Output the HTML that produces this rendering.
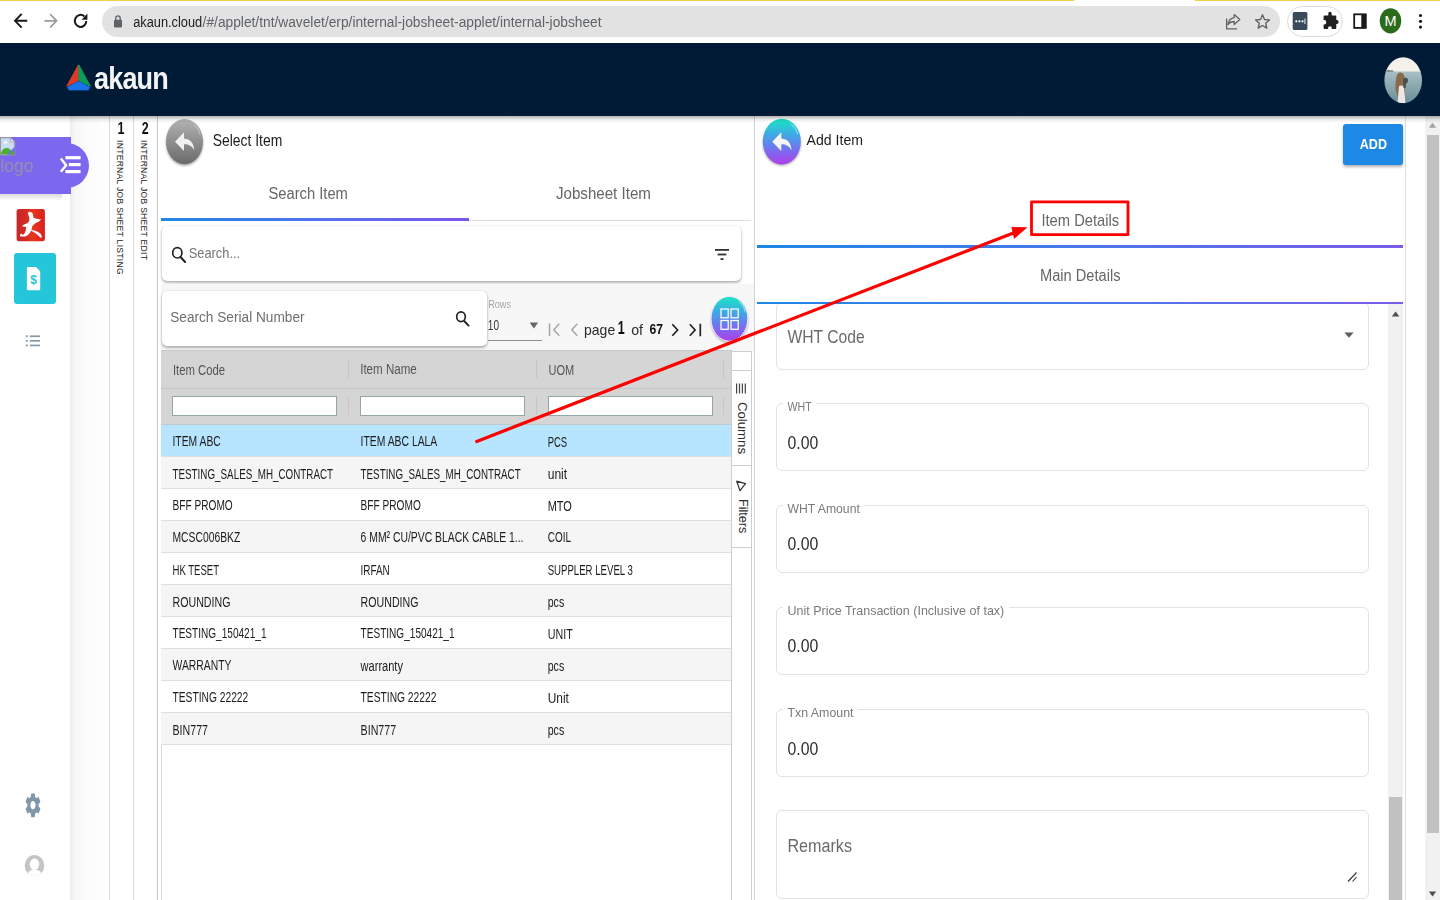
<!DOCTYPE html>
<html lang="en">
<head>
<meta charset="utf-8">
<title>akaun - internal jobsheet</title>
<style>
*{box-sizing:border-box;margin:0;padding:0}
html,body{width:1440px;height:900px;overflow:hidden;background:#fff}
body{position:relative;font-family:"Liberation Sans",sans-serif;color:#222}
.abs{position:absolute}
.t{position:absolute;white-space:nowrap;line-height:1}
/* browser chrome */
#chrome{left:0;top:0;width:1440px;height:43px;background:#fff}
#yl1{left:0;top:0;width:1074px;height:1.200px;background:#f7cf45}
#yl2{left:1195px;top:0;width:245px;height:1.200px;background:#f7cf45}
#urlbar{left:101.500px;top:5.800px;width:1178px;height:31px;border-radius:16px;background:#e2e2e2}
#extpill{left:1287px;top:6px;width:56px;height:31px;border-radius:16px;background:#fff;border:1px solid #dcdcdc}
/* app header */
#hdr{left:0;top:43px;width:1440px;height:72.500px;background:#011a35}
#hshadow{left:0;top:115.500px;width:1440px;height:7px;background:linear-gradient(rgba(0,0,0,.3),rgba(0,0,0,.08) 50%,rgba(0,0,0,0))}
/* sidebar */
#side{left:0;top:116px;width:70px;height:784px;background:#fff}
#sideshadow{left:70px;top:116px;width:39px;height:784px;background:linear-gradient(90deg,#ededed 0,#f6f6f6 12%,#fbfbfb 40%,#fff 100%)}
.vline{position:absolute;top:116px;width:1px;height:784px;background:#d9d9d9}
.vtxt{position:absolute;transform-origin:0 0;transform:rotate(90deg);white-space:nowrap;font-size:8.5px;line-height:10px;color:#222;letter-spacing:.32px}
/* panels */
.tab{color:#666;font-size:15px}
.card{position:absolute;background:#fff;border-radius:5px;box-shadow:0 2px 3px rgba(0,0,0,.28),0 0 2px rgba(0,0,0,.15)}
.gtxt{position:absolute;white-space:nowrap;line-height:1;font-size:14px;color:#1f1f1f;transform-origin:0 50%;transform:scaleX(.8)}
.row{position:absolute;left:162px;width:569px;height:32px;border-bottom:1px solid #dcdcdc}
.fin{position:absolute;top:396px;height:20px;background:#fff;border:1px solid #93a7a7}
.field{position:absolute;left:776px;width:593px;border:1px solid #e2e2e2;border-radius:6px;background:#fff}
.flabel{position:absolute;left:783px;background:#fff;padding:0 4px;font-size:12px;color:#777;line-height:12px;white-space:nowrap}
.fval{position:absolute;left:787px;font-size:16px;color:#333;line-height:16px;white-space:nowrap}
</style>
</head>
<body>

<!-- ============ BROWSER CHROME ============ -->
<div id="chrome" class="abs"></div>
<div id="yl1" class="abs"></div><div id="yl2" class="abs"></div>
<div id="urlbar" class="abs"></div>
<div id="extpill" class="abs"></div>

<svg class="abs" style="left:0;top:0" width="1440" height="43" viewBox="0 0 1440 43">
  <!-- back -->
  <g fill="none" stroke="#1a1a1a" stroke-width="1.9" stroke-linecap="square" stroke-linejoin="miter">
    <path d="M26.3 20.8H15.8M21 14.6l-6 6.2 6 6.2"/>
  </g>
  <!-- forward (disabled) -->
  <g fill="none" stroke="#9b9b9b" stroke-width="1.7" stroke-linecap="square">
    <path d="M45.3 20.8h10.5M50.8 14.8l5.8 6-5.8 6"/>
  </g>
  <!-- reload -->
  <g fill="none" stroke="#1a1a1a" stroke-width="2">
    <path d="M86.3 20.9a5.7 6 0 1 1-1.9-4.5"/>
  </g>
  <path d="M87.4 13.6v6.2h-5.8z" fill="#1a1a1a"/>
  <!-- lock -->
  <rect x="114" y="19.8" width="8" height="7.8" rx="1" fill="#5f6368"/>
  <path d="M115.8 20v-1.8a2.2 2.3 0 0 1 4.4 0V20" fill="none" stroke="#5f6368" stroke-width="1.4"/>
  <!-- share -->
  <g fill="none" stroke="#5f6368" stroke-width="1.3" stroke-linejoin="round">
    <path d="M1226.6 18.5v10.3h10.5"/>
    <path d="M1234.2 14.6l5.6 5-5.6 5v-3.1c-3 0-4.800 1-6.300 3 .5-3.300 2.200-6.300 6.300-6.900z"/>
  </g>
  <!-- star -->
  <path d="M1262.500 14.800l2 4.700 4.900.4-3.700 3.300 1.100 4.900-4.300-2.600-4.300 2.600 1.100-4.900-3.700-3.300 4.900-.4z" fill="none" stroke="#5f6368" stroke-width="1.4" stroke-linejoin="round"/>
  <!-- ext: dark square with dots -->
  <rect x="1292.700" y="12" width="14.700" height="18" rx="1.500" fill="#3a4a5a"/>
  <circle cx="1296.300" cy="21.300" r="1.100" fill="#fff"/><circle cx="1299.400" cy="21.300" r="1.100" fill="#fff"/><circle cx="1302.500" cy="21.300" r="1.100" fill="#fff"/>
  <rect x="1304.500" y="18.600" width=".9" height="5.400" fill="#fff"/>
  <!-- puzzle -->
  <path d="M1328.300 13.700a1.700 1.900 0 0 1 3.400 0v1.700h3.600a1 1 0 0 1 1 1v3.700h.5a1.800 2 0 0 1 0 4h-.5v3.900a1 1 0 0 1-1 1h-3.500v-.8a1.900 2 0 0 0-3.800 0v.8h-3.400a1 1 0 0 1-1-1v-3.500h.700a2 2.200 0 0 0 0-4.400h-.700v-3.700a1 1 0 0 1 1-1h3.700z" fill="#1f1f1f"/>
  <!-- side panel -->
  <rect x="1354.200" y="14.300" width="11.500" height="13.600" fill="none" stroke="#1a1a1a" stroke-width="1.800"/>
  <rect x="1361.300" y="14" width="5" height="14.200" fill="#1a1a1a"/>
  <!-- profile -->
  <ellipse cx="1390.500" cy="20.800" rx="10.800" ry="12.600" fill="#2b6b1c"/>
  <text x="1390.500" y="26" font-family="Liberation Sans, sans-serif" font-size="14.500" fill="#fff" text-anchor="middle">M</text>
  <!-- kebab -->
  <circle cx="1420.500" cy="15.500" r="1.600" fill="#1a1a1a"/><circle cx="1420.500" cy="21.300" r="1.600" fill="#1a1a1a"/><circle cx="1420.500" cy="27.100" r="1.600" fill="#1a1a1a"/>
</svg>
<div class="t" id="url" style="left:133.2px;top:16.95px;font-size:12.81px;color:#202124;transform-origin:0 84.65%;transform:scaleY(1.13);">akaun.cloud</div>
<div class="t" style="left:202.6px;top:16.15px;font-size:13.76px;color:#5f6368;transform-origin:0 84.65%;transform:scaleY(1.06);">/#/applet/tnt/wavelet/erp/internal-jobsheet-applet/internal-jobsheet</div>


<!-- ============ APP HEADER ============ -->
<div id="hdr" class="abs"></div>

<svg class="abs" style="left:60px;top:58px" width="40" height="40" viewBox="60 58 40 40">
  <path d="M78.300 65L66.800 86.200 78.300 80.500z" fill="#dd3b26" stroke="#dd3b26" stroke-width="1" stroke-linejoin="round"/>
  <path d="M78.900 65L90.300 86.200 78.900 80.500z" fill="#0e9d58" stroke="#0e9d58" stroke-width="1" stroke-linejoin="round"/>
  <path d="M78.600 81.400L67.600 87.300l1.500 2.600h19l1.500-2.600z" fill="#1a73e8" stroke="#1a73e8" stroke-width="1" stroke-linejoin="round"/>
</svg>
<div class="t" id="logotxt" style="left:93.500px;top:62px;font-size:32px;font-weight:bold;color:#f4f4f4;transform-origin:0 0;transform:scaleX(.845);letter-spacing:-1px">akaun</div>
<svg class="abs" style="left:1380px;top:54px" width="48" height="54" viewBox="1380 54 48 54">
  <defs><clipPath id="avc"><ellipse cx="1403.200" cy="80.200" rx="18.800" ry="23"/></clipPath>
  <linearGradient id="sea" x1="0" y1="0" x2="0" y2="1"><stop offset="0" stop-color="#a9bfc4"/><stop offset="1" stop-color="#5f8790"/></linearGradient></defs>
  <g clip-path="url(#avc)">
    <rect x="1380" y="54" width="48" height="18" fill="#f3f1ea"/>
    <rect x="1380" y="71.500" width="48" height="36" fill="url(#sea)"/>
    <path d="M1386 71.600c1-1.400 3-1.600 4-.8 1.500-.8 3.500-.3 4 .8z" fill="#3c5158"/>
    <path d="M1399.500 72.500c-3 1-3.500 6-3.800 10s-.7 8 1.300 12l2.500 8h6l-.5-10 .5-8-1-6c.5-3-1.500-6.500-5-6z" fill="#8a6a4a"/>
    <path d="M1399 86c2-1 4-.5 5 1l1.500 16h-8z" fill="#ece6e6"/>
    <path d="M1403 79c1.500-2 4.500-1.500 5 .5s-1 3.500-2 4.500l-.5 4h-2z" fill="#4a4f52"/>
  </g>
</svg>


<!-- ============ SIDEBAR ============ -->
<div id="side" class="abs"></div>
<div id="sideshadow" class="abs"></div>

<div class="abs" style="left:0;top:193px;width:62px;height:8px;background:linear-gradient(rgba(0,0,0,.16),rgba(0,0,0,0))"></div>
<div class="abs" style="left:43px;top:142.800px;width:45.500px;height:45.500px;border-radius:50%;background:#7b68ee"></div>
<div class="abs" style="left:0;top:137px;width:70.700px;height:56.800px;background:#7b68ee"></div>
<svg class="abs" style="left:0;top:137px" width="16" height="19" viewBox="0 0 16 19">
  <path d="M.5 .8h10.200l4 4.200v13H.5z" fill="#c9dcf5" stroke="#9a9a9a" stroke-width="1"/>
  <path d="M10.700 .8v4.200h4z" fill="#f4f4f4" stroke="#9a9a9a" stroke-width=".8"/>
  <path d="M3 6.200l2.500-2.500 2.500 2.500z" fill="#fff"/>
  <path d="M1 17.500c0-4 2.500-6.500 5.500-6.500s4 1.500 5 3.500l2.500 3z" fill="#4caf35"/>
  <path d="M14.700 9.500L7 17.800h7.700z" fill="#7b68ee"/>
  <path d="M11 15.500l3.200-2v4.300h-4z" fill="#4caf35"/>
</svg>
<div class="t" id="logoalt" style="left:.5px;top:157.300px;font-size:17.400px;color:#958fae;transform-origin:0 0;transform:scaleY(1.06)">logo</div>
<svg class="abs" style="left:58px;top:154px" width="24" height="22" viewBox="58 154 24 22">
  <path d="M60.800 158.600l5.400 6.600-5.400 6.600" fill="none" stroke="#fff" stroke-width="2.400"/>
  <rect x="65.400" y="156.100" width="15.200" height="3.200" fill="#fff"/>
  <rect x="68.800" y="163" width="11.800" height="3.200" fill="#fff"/>
  <rect x="65.400" y="170" width="15.200" height="3.200" fill="#fff"/>
</svg>
<!-- red icon -->
<svg class="abs" style="left:16px;top:208px" width="30" height="34" viewBox="0 0 30 34">
  <defs><linearGradient id="rg" x1="0" y1="0" x2="1" y2="0"><stop offset="0" stop-color="#c62828"/><stop offset=".25" stop-color="#cf2a27"/><stop offset=".6" stop-color="#e8351f"/><stop offset="1" stop-color="#d81f1f"/></linearGradient></defs>
  <rect x=".6" y=".9" width="28.300" height="32.400" rx="2.500" fill="url(#rg)"/>
  <path d="M12.700 3.700C14.500 3.600 16 4.400 16.600 5.500 17.200 7 17.300 8.500 17.400 9.600 20 11 22.500 11.600 25 11.200 24 13 22 14.200 20.200 14.800 18.500 15.800 17 17 16.200 18.500 15.800 20 15.600 21.200 15.500 22 19 22.300 22.500 24 24.800 26 25.600 27.200 25.900 28.500 25.800 29.600L24.600 29.800C22 27 18.500 24.300 15 22.800 14 25.500 12 27.500 9.400 28.400L4.300 28.400C3.900 27.800 3.900 27.200 4.200 26.600L5.800 25.600 6.600 27C8.400 26 9.200 24.500 9.600 23 10 21.500 10.200 20 10.200 19 8.800 19 7.400 18.800 6.100 18.200 6.600 17.400 7.300 17 8 16.600 10 16 11.800 15 12.800 13.800 13.500 12.500 13.500 10.800 13.200 9.200 12.800 7.800 12.200 6.500 12 5.300z" fill="#fff"/>
</svg>
<!-- teal box -->
<div class="abs" style="left:14px;top:253px;width:42px;height:51px;border-radius:3px;background:#26c6da"></div>
<svg class="abs" style="left:26px;top:266px" width="16" height="26" viewBox="0 0 16 26">
  <path d="M2.300 1h7.700l4.200 4.200v17.700a1.400 1.400 0 0 1-1.400 1.400H2.300A1.400 1.400 0 0 1 .9 22.900V2.400A1.400 1.400 0 0 1 2.300 1z" fill="#fff"/>
  <text x="7.600" y="17.700" font-family="Liberation Sans, sans-serif" font-weight="bold" font-size="12" fill="#26c6da" text-anchor="middle">$</text>
</svg>
<!-- list icon -->
<svg class="abs" style="left:25px;top:334px" width="16" height="14" viewBox="0 0 16 14">
  <g fill="#8699a8"><rect x=".8" y="1.200" width="1.800" height="2"/><rect x=".8" y="5.800" width="1.800" height="2"/><rect x=".8" y="10.400" width="1.800" height="2"/>
  <rect x="4.800" y="1.400" width="10.200" height="1.700"/><rect x="4.800" y="6" width="10.200" height="1.700"/><rect x="4.800" y="10.600" width="10.200" height="1.700"/></g>
</svg>
<!-- gear -->
<svg class="abs" style="left:23.600px;top:790.500px" width="18" height="28.500" viewBox="0 0 24 24" preserveAspectRatio="none">
  <path fill="#8097a7" d="M19.430 12.980c.040-.320.070-.640.070-.980s-.030-.660-.070-.980l2.110-1.650c.190-.150.240-.420.120-.640l-2-3.460c-.120-.220-.390-.300-.610-.220l-2.490 1c-.520-.400-1.080-.730-1.690-.980l-.380-2.650C14.460 2.180 14.250 2 14 2h-4c-.250 0-.460.180-.490.420l-.380 2.650c-.610.250-1.170.590-1.690.980l-2.490-1c-.230-.090-.490 0-.610.220l-2 3.460c-.130.220-.070.490.120.640l2.110 1.650c-.040.320-.070.650-.070.980s.030.660.070.980l-2.110 1.650c-.190.150-.240.420-.120.640l2 3.460c.120.220.390.300.610.220l2.490-1c.520.400 1.080.730 1.690.980l.380 2.650c.030.240.240.420.490.420h4c.250 0 .460-.180.490-.420l.380-2.650c.610-.250 1.170-.590 1.690-.980l2.490 1c.230.090.490 0 .610-.220l2-3.460c.120-.220.070-.490-.120-.640l-2.110-1.650zM12 15.500c-1.930 0-3.500-1.570-3.500-3.500s1.570-3.500 3.500-3.500 3.500 1.570 3.500 3.500-1.570 3.500-3.500 3.500z"/>
</svg>
<!-- user -->
<svg class="abs" style="left:24px;top:854px" width="22" height="24" viewBox="0 0 22 24">
  <defs><clipPath id="uc"><ellipse cx="10.500" cy="11.600" rx="9.800" ry="10.600"/></clipPath></defs>
  <g clip-path="url(#uc)"><rect width="22" height="24" fill="#c4c4c4"/>
  <ellipse cx="10.500" cy="10.200" rx="4.700" ry="5.700" fill="#fff"/>
  <path d="M2.500 24c0-5 3-8.500 8-8.500s8 3.500 8 8.500z" fill="#fff"/></g>
</svg>
<div class="vline" style="left:109px"></div>
<div class="vline" style="left:133px"></div>
<div class="vline" style="left:156.800px;width:1.500px;background:#c9c9c9"></div>
<div class="t" style="left:117.52px;top:124.400px;font-size:12.5px;color:#111;font-weight:bold;transform-origin:0 84.65%;transform:scaleY(1.34);">1</div>
<div class="t" style="left:141.82px;top:124.400px;font-size:12.5px;color:#111;font-weight:bold;transform-origin:0 84.65%;transform:scaleY(1.34);">2</div>
<div class="vtxt" id="vt1" style="left:125px;top:140px">INTERNAL JOB SHEET LISTING</div>
<div class="vtxt" id="vt2" style="left:149px;top:140px">INTERNAL JOB SHEET EDIT</div>


<!-- ============ LEFT PANEL ============ -->
<!--LEFT-PANEL-START-->
<div class="abs" style="left:160.500px;top:351px;width:1px;height:549px;background:#d4d8da"></div>
<div class="abs" style="left:754px;top:116px;width:1.300px;height:784px;background:#d2d2d2"></div>
<svg class="abs" style="left:160px;top:114px" width="50" height="58" viewBox="160 114 50 58">
<defs><linearGradient id="gb" x1="0" y1="0" x2="0" y2="1"><stop offset="0" stop-color="#b4b4b4"/><stop offset=".5" stop-color="#8e8e8e"/><stop offset="1" stop-color="#6a6a6a"/></linearGradient>
<filter id="bs" x="-30%" y="-30%" width="160%" height="170%"><feGaussianBlur stdDeviation="1.300"/></filter></defs>
<ellipse cx="184.500" cy="143.500" rx="18.500" ry="22.200" fill="#000" opacity=".35" filter="url(#bs)"/>
<ellipse cx="184.500" cy="141.600" rx="18.500" ry="22.600" fill="url(#gb)"/>
<path d="M193.800 124.500c3.300 2.400 5.600 6 6.400 10" fill="none" stroke="#d8d8d8" stroke-width=".9" opacity=".8"/>
<path d="M184 132.300v6.200c6.500.6 9.800 4.500 10.300 11.800-2.300-4.300-5.600-6-10.300-6v6.800l-9-9.400z" fill="#f0f0f0"/>
</svg>
<div class="t" id="selitem" style="left:212.7px;top:134.52px;font-size:13.91px;color:#1c1c1c;transform-origin:0 84.65%;transform:scaleY(1.12);">Select Item</div>
<div class="t" style="left:268.4px;top:186.7px;font-size:14.76px;color:#666;transform-origin:0 84.65%;transform:scaleY(1.11);">Search Item</div>
<div class="t" id="jobtab" style="left:556px;top:186.4px;font-size:15.12px;color:#666;transform-origin:0 84.65%;transform:scaleY(1.09);">Jobsheet Item</div>
<div class="abs" style="left:161px;top:219.500px;width:590px;height:1px;background:#dcdcdc"></div>
<div class="abs" style="left:160.700px;top:217.500px;width:308px;height:3px;background:linear-gradient(90deg,#1e88e5,#5a6df0 60%,#7a54f0)"></div>
<div class="card" style="left:162px;top:226px;width:579.200px;height:55px"></div>
<svg class="abs" style="left:170px;top:245px" width="18" height="19" viewBox="170 245 18 19"><ellipse cx="177.300" cy="252.800" rx="4.600" ry="5.200" fill="none" stroke="#222" stroke-width="1.700"/><path d="M180.500 257l4.600 5" stroke="#222" stroke-width="2" stroke-linecap="round"/></svg>
<div class="t" style="left:188.7px;top:248.01px;font-size:12.87px;color:#757575;transform-origin:0 84.65%;transform:scaleY(1.18);">Search...</div>
<svg class="abs" style="left:714px;top:247px" width="16" height="14" viewBox="714 247 16 14"><g fill="#333"><rect x="715" y="249" width="14" height="1.800"/><rect x="717.600" y="253.600" width="8.800" height="1.800"/><rect x="720.500" y="258.200" width="3" height="1.800"/></g></svg>
<div class="abs" style="left:161px;top:284px;width:593px;height:67px;background:#f7f7f7"></div>
<div class="card" style="left:162px;top:290.500px;width:325px;height:55px"></div>
<div class="t" style="left:170.2px;top:311.33px;font-size:13.67px;color:#6e6e6e;transform-origin:0 84.65%;transform:scaleY(1.12);">Search Serial Number</div>
<svg class="abs" style="left:454px;top:309px" width="18" height="19" viewBox="454 309 18 19"><ellipse cx="461" cy="316.800" rx="4.300" ry="4.900" fill="none" stroke="#222" stroke-width="1.700"/><path d="M464.200 321l4.400 4.600" stroke="#222" stroke-width="1.900" stroke-linecap="round"/></svg>
<div class="t" style="left:488.2px;top:300.88px;font-size:9.12px;color:#a5a5a5;transform-origin:0 84.65%;transform:scaleY(1.21);">Rows</div>
<div class="t" style="left:487.8px;top:321.68px;font-size:10.07px;color:#3a3a3a;transform-origin:0 84.65%;transform:scaleY(1.44);">10</div>
<svg class="abs" style="left:528px;top:321px" width="12" height="9" viewBox="0 0 12 9"><path d="M1.600 1.600h8.600l-4.300 5.800z" fill="#666"/></svg>
<div class="abs" style="left:488px;top:340px;width:54px;height:1px;background:#8e8e8e"></div>
<svg class="abs" style="left:546px;top:320px" width="160" height="20" viewBox="546 320 160 20" fill="none" stroke-width="1.500">
<g stroke="#a6a6a6"><path d="M549.500 323.500v12.500M559.300 323.800l-5.500 6 5.500 6"/><path d="M577.300 323.800l-5.500 6 5.500 6"/></g>
<g stroke="#222" stroke-width="1.700"><path d="M672.300 324.200l5.300 5.800-5.300 5.800"/><path d="M689.800 324.200l5.300 5.800-5.300 5.800M700.300 323.700v12.500"/></g></svg>
<div class="t" style="left:584px;top:322.73px;font-size:14.02px;color:#2b2b2b;transform-origin:0 84.65%;transform:scaleY(1.1);">page</div>
<div class="t" style="left:617.8px;top:324.12px;font-size:12.5px;color:#111;font-weight:bold;transform-origin:0 84.65%;transform:scaleY(1.47);">1</div>
<div class="t" style="left:631.25px;top:322.62px;font-size:14.15px;color:#2b2b2b;transform-origin:0 84.65%;transform:scaleY(1.1);">of</div>
<div class="t" style="left:649.6px;top:324.33px;font-size:12.14px;color:#111;font-weight:bold;transform-origin:0 84.65%;transform:scaleY(1.2);">67</div>
<svg class="abs" style="left:706px;top:290px" width="48" height="58" viewBox="706 290 48 58">
<defs><linearGradient id="tp" x1="0" y1="0" x2="0" y2="1"><stop offset="0" stop-color="#19e6c3"/><stop offset=".35" stop-color="#3fa9e6"/><stop offset=".7" stop-color="#7a6cf0"/><stop offset="1" stop-color="#b03ee8"/></linearGradient></defs>
<ellipse cx="729.500" cy="320.500" rx="18.500" ry="22.600" fill="#000" opacity=".3" filter="url(#bs)"/>
<ellipse cx="729.400" cy="318.800" rx="18.400" ry="22.400" fill="url(#tp)" stroke="#f3eef8" stroke-width="1"/>
<path d="M738.800 301.500c3.300 2.600 5.400 6 6.200 10" fill="none" stroke="#c8fff4" stroke-width=".9" opacity=".75"/>
<g fill="none" stroke="#fff" stroke-width="1.250"><rect x="721" y="309" width="7.200" height="8.800"/><rect x="731" y="309" width="7.200" height="8.800"/><rect x="721" y="320.500" width="7.200" height="8.800"/><rect x="731" y="320.500" width="7.200" height="8.800"/></g>
</svg>
<div class="abs" style="left:161px;top:350px;width:570.500px;height:75px;background:#d5d5d5;border-top:1px solid #c4c9cb"></div>
<div class="abs" style="left:161px;top:388px;width:570.500px;height:1px;background:#bfc8ca"></div>
<div class="abs" style="left:161px;top:424px;width:570.500px;height:1px;background:#bfc8ca"></div>
<div class="abs" style="left:348.4px;top:360px;width:1px;height:18px;background:#c6c6c6"></div>
<div class="abs" style="left:348.4px;top:397px;width:1px;height:18px;background:#c6c6c6"></div>
<div class="abs" style="left:536px;top:360px;width:1px;height:18px;background:#c6c6c6"></div>
<div class="abs" style="left:536px;top:397px;width:1px;height:18px;background:#c6c6c6"></div>
<div class="abs" style="left:723px;top:360px;width:1px;height:18px;background:#c6c6c6"></div>
<div class="abs" style="left:723px;top:397px;width:1px;height:18px;background:#c6c6c6"></div>
<div class="t" style="left:172.9px;top:365.52px;font-size:11.32px;color:#555;transform-origin:0 84.65%;transform:scaleY(1.26);">Item Code</div>
<div class="t" style="left:360.2px;top:365.29px;font-size:11.59px;color:#555;transform-origin:0 84.65%;transform:scaleY(1.23);">Item Name</div>
<div class="t" style="left:548.5px;top:365.78px;font-size:11.02px;color:#555;transform-origin:0 84.65%;transform:scaleY(1.29);">UOM</div>
<div class="fin" style="left:172.4px;width:165px"></div>
<div class="fin" style="left:360.2px;width:165px"></div>
<div class="fin" style="left:548px;width:165px"></div>
<div class="abs" style="left:161px;top:425px;width:570.500px;height:32px;background:#b7e4ff;border-bottom:1px solid #dddfe0"></div>
<div class="t" style="left:172.5px;top:438.14px;font-size:10.35px;color:#1c1c1c;transform-origin:0 84.65%;transform:scaleY(1.49);">ITEM ABC</div>
<div class="t" style="left:360.6px;top:438.12px;font-size:10.38px;color:#1c1c1c;transform-origin:0 84.65%;transform:scaleY(1.48);">ITEM ABC LALA</div>
<div class="t" style="left:547.7px;top:438.87px;font-size:9.48px;color:#1c1c1c;transform-origin:0 84.65%;transform:scaleY(1.62);">PCS</div>
<div class="abs" style="left:161px;top:457px;width:570.500px;height:32px;background:#f5f5f5;border-bottom:1px solid #dddfe0"></div>
<div class="t" style="left:172.5px;top:470.58px;font-size:9.83px;color:#1c1c1c;transform-origin:0 84.65%;transform:scaleY(1.57);">TESTING_SALES_MH_CONTRACT</div>
<div class="t" style="left:360.6px;top:470.6px;font-size:9.81px;color:#1c1c1c;transform-origin:0 84.65%;transform:scaleY(1.57);">TESTING_SALES_MH_CONTRACT</div>
<div class="t" style="left:547.7px;top:468.66px;font-size:12.09px;color:#1c1c1c;transform-origin:0 84.65%;transform:scaleY(1.27);">unit</div>
<div class="abs" style="left:161px;top:489px;width:570.500px;height:32px;background:#fff;border-bottom:1px solid #dddfe0"></div>
<div class="t" style="left:172.5px;top:502.33px;font-size:10.13px;color:#1c1c1c;transform-origin:0 84.65%;transform:scaleY(1.52);">BFF PROMO</div>
<div class="t" style="left:360.6px;top:502.33px;font-size:10.13px;color:#1c1c1c;transform-origin:0 84.65%;transform:scaleY(1.52);">BFF PROMO</div>
<div class="t" style="left:547.7px;top:501.6px;font-size:10.98px;color:#1c1c1c;transform-origin:0 84.65%;transform:scaleY(1.4);">MTO</div>
<div class="abs" style="left:161px;top:521px;width:570.500px;height:32px;background:#f5f5f5;border-bottom:1px solid #dddfe0"></div>
<div class="t" style="left:172.5px;top:534.15px;font-size:10.34px;color:#1c1c1c;transform-origin:0 84.65%;transform:scaleY(1.49);">MCSC006BKZ</div>
<div class="t" style="left:360.6px;top:534.1px;font-size:10.4px;color:#1c1c1c;transform-origin:0 84.65%;transform:scaleY(1.48);">6 MM² CU/PVC BLACK CABLE 1...</div>
<div class="t" style="left:547.7px;top:534.45px;font-size:9.98px;color:#1c1c1c;transform-origin:0 84.65%;transform:scaleY(1.54);">COIL</div>
<div class="abs" style="left:161px;top:553px;width:570.500px;height:32px;background:#fff;border-bottom:1px solid #dddfe0"></div>
<div class="t" style="left:172.5px;top:566.8px;font-size:9.57px;color:#1c1c1c;transform-origin:0 84.65%;transform:scaleY(1.61);">HK TESET</div>
<div class="t" style="left:360.6px;top:566.51px;font-size:9.92px;color:#1c1c1c;transform-origin:0 84.65%;transform:scaleY(1.55);">IRFAN</div>
<div class="t" style="left:547.7px;top:566.76px;font-size:9.62px;color:#1c1c1c;transform-origin:0 84.65%;transform:scaleY(1.6);">SUPPLER LEVEL 3</div>
<div class="abs" style="left:161px;top:585px;width:570.500px;height:32px;background:#f5f5f5;border-bottom:1px solid #dddfe0"></div>
<div class="t" style="left:172.5px;top:597.88px;font-size:10.65px;color:#1c1c1c;transform-origin:0 84.65%;transform:scaleY(1.45);">ROUNDING</div>
<div class="t" style="left:360.6px;top:597.88px;font-size:10.65px;color:#1c1c1c;transform-origin:0 84.65%;transform:scaleY(1.45);">ROUNDING</div>
<div class="t" style="left:547.7px;top:597.92px;font-size:10.6px;color:#1c1c1c;transform-origin:0 84.65%;transform:scaleY(1.45);">pcs</div>
<div class="abs" style="left:161px;top:617px;width:570.500px;height:32px;background:#fff;border-bottom:1px solid #dddfe0"></div>
<div class="t" style="left:172.5px;top:630.38px;font-size:10.07px;color:#1c1c1c;transform-origin:0 84.65%;transform:scaleY(1.53);">TESTING_150421_1</div>
<div class="t" style="left:360.6px;top:630.38px;font-size:10.07px;color:#1c1c1c;transform-origin:0 84.65%;transform:scaleY(1.53);">TESTING_150421_1</div>
<div class="t" style="left:547.7px;top:629.83px;font-size:10.72px;color:#1c1c1c;transform-origin:0 84.65%;transform:scaleY(1.44);">UNIT</div>
<div class="abs" style="left:161px;top:649px;width:570.500px;height:32px;background:#f5f5f5;border-bottom:1px solid #dddfe0"></div>
<div class="t" style="left:172.5px;top:662.13px;font-size:10.36px;color:#1c1c1c;transform-origin:0 84.65%;transform:scaleY(1.49);">WARRANTY</div>
<div class="t" style="left:360.6px;top:661.54px;font-size:11.06px;color:#1c1c1c;transform-origin:0 84.65%;transform:scaleY(1.39);">warranty</div>
<div class="t" style="left:547.7px;top:661.92px;font-size:10.6px;color:#1c1c1c;transform-origin:0 84.65%;transform:scaleY(1.45);">pcs</div>
<div class="abs" style="left:161px;top:681px;width:570.500px;height:32px;background:#fff;border-bottom:1px solid #dddfe0"></div>
<div class="t" style="left:172.5px;top:694.22px;font-size:10.25px;color:#1c1c1c;transform-origin:0 84.65%;transform:scaleY(1.5);">TESTING 22222</div>
<div class="t" style="left:360.6px;top:694.22px;font-size:10.25px;color:#1c1c1c;transform-origin:0 84.65%;transform:scaleY(1.5);">TESTING 22222</div>
<div class="t" style="left:547.7px;top:693.81px;font-size:11.92px;color:#1c1c1c;transform-origin:0 84.65%;transform:scaleY(1.29);">Unit</div>
<div class="abs" style="left:161px;top:713px;width:570.500px;height:32px;background:#f5f5f5;border-bottom:1px solid #dddfe0"></div>
<div class="t" style="left:172.5px;top:725.87px;font-size:10.67px;color:#1c1c1c;transform-origin:0 84.65%;transform:scaleY(1.44);">BIN777</div>
<div class="t" style="left:360.6px;top:725.87px;font-size:10.67px;color:#1c1c1c;transform-origin:0 84.65%;transform:scaleY(1.44);">BIN777</div>
<div class="t" style="left:547.7px;top:725.92px;font-size:10.6px;color:#1c1c1c;transform-origin:0 84.65%;transform:scaleY(1.45);">pcs</div>
<div class="abs" style="left:731px;top:350.700px;width:20.500px;height:550px;background:#fff;border-left:1px solid #c9cfd1;border-right:1px solid #c9cfd1;border-top:1px solid #c9cfd1"></div>
<div class="abs" style="left:732px;top:370px;width:18.500px;height:1px;background:#c9cfd1"></div>
<div class="abs" style="left:732px;top:465.2px;width:18.500px;height:1px;background:#c9cfd1"></div>
<div class="abs" style="left:732px;top:546.6px;width:18.500px;height:1px;background:#c9cfd1"></div>
<svg class="abs" style="left:735px;top:382px" width="12" height="13" viewBox="0 0 12 13"><g fill="#444"><rect x="1" y="1.500" width="1.200" height="10"/><rect x="3.900" y="1.500" width="1.200" height="10"/><rect x="6.800" y="1.500" width="1.200" height="10"/><rect x="9.700" y="1.500" width="1.200" height="10"/></g></svg>
<div class="vtxt" id="colsv" style="left:748.500px;top:402.300px;font-size:13.200px;line-height:13px;color:#2e2e2e;letter-spacing:0">Columns</div>
<svg class="abs" style="left:734px;top:478px" width="14" height="15" viewBox="734 478 14 15"><path d="M736.700 481.200L745.500 483.700 740 490.700z" fill="none" stroke="#333" stroke-width="1.200" stroke-linejoin="round"/></svg>
<div class="vtxt" id="filv" style="left:748.500px;top:499px;font-size:12.600px;line-height:13px;color:#2e2e2e;letter-spacing:0">Filters</div>
<!--LEFT-PANEL-END-->

<!-- ============ RIGHT PANEL ============ -->
<!--RIGHT-PANEL-START-->
<div class="abs" style="left:1404.500px;top:116px;width:1px;height:784px;background:#dedede"></div>
<div class="abs" style="left:1425px;top:116px;width:15px;height:784px;background:#f1f1f1"></div>
<div class="abs" style="left:1426.600px;top:135px;width:12.400px;height:698px;background:#c1c1c1"></div>
<svg class="abs" style="left:1425px;top:118px" width="15" height="14" viewBox="0 0 15 14"><path d="M3.800 9.800L7.500 4.800l3.700 5z" fill="#a3a3a3"/></svg>
<svg class="abs" style="left:1425px;top:887px" width="15" height="14" viewBox="0 0 15 14"><path d="M3.800 4.500L7.500 9.500l3.700-5z" fill="#505050"/></svg>
<svg class="abs" style="left:757px;top:114px" width="50" height="58" viewBox="757 114 50 58">
<ellipse cx="781.800" cy="143.500" rx="19" ry="22.200" fill="#000" opacity=".32" filter="url(#bs)"/>
<ellipse cx="781.800" cy="141.600" rx="19" ry="22.800" fill="url(#tp)"/>
<path d="M791.300 124.500c3.300 2.400 5.600 6 6.400 10" fill="none" stroke="#d8f8f8" stroke-width=".9" opacity=".7"/>
<path d="M781.300 132.300v6.200c6.500.6 9.800 4.500 10.300 11.800-2.300-4.300-5.600-6-10.300-6v6.800l-9-9.400z" fill="#f6f6f6"/>
</svg>
<div class="t" id="additem" style="left:806.6px;top:133.37px;font-size:14.09px;color:#1c1c1c;transform-origin:0 84.65%;transform:scaleY(1.1);">Add Item</div>
<div class="abs" style="left:1343.300px;top:124.400px;width:59.500px;height:40.800px;background:#1e88e5;border-radius:3px;box-shadow:0 2px 3px rgba(0,0,0,.3)"></div>
<div class="t" style="left:1359.8px;top:139.27px;font-size:12.55px;color:#fff;font-weight:bold;transform-origin:0 84.65%;transform:scaleY(1.22);">ADD</div>
<div class="t" id="itemdet" style="left:1041.4px;top:213.93px;font-size:14.74px;color:#666;transform-origin:0 84.65%;transform:scaleY(1.11);">Item Details</div>
<div class="abs" style="left:757px;top:245px;width:645.600px;height:3px;background:linear-gradient(90deg,#1e88e5,#4a78ea 50%,#7a5ce8)"></div>
<div class="t" id="maindet" style="left:1040px;top:269.2px;font-size:14.65px;color:#666;transform-origin:0 84.65%;transform:scaleY(1.12);">Main Details</div>
<div class="abs" style="left:757px;top:301.500px;width:645.600px;height:2.300px;background:linear-gradient(90deg,#1e88e5,#4a78ea 50%,#7a5ce8)"></div>
<div class="abs" style="left:1387.500px;top:304px;width:15.200px;height:596px;background:#f1f1f1"></div>
<div class="abs" style="left:1389px;top:797px;width:12.900px;height:103px;background:#c1c1c1"></div>
<svg class="abs" style="left:1387.500px;top:307px" width="15" height="14" viewBox="0 0 15 14"><path d="M3.800 9.600L7.600 4.600l3.800 5z" fill="#505050"/></svg>
<div class="abs" style="left:757px;top:304px;width:630px;height:596px;overflow:hidden">
<div class="field" style="left:19.300px;top:-2px;height:67.5px;width:592.300px"></div>
<div class="field" style="left:19.300px;top:99px;height:67.5px;width:592.300px"></div>
<div class="field" style="left:19.300px;top:201.2px;height:67.5px;width:592.300px"></div>
<div class="field" style="left:19.300px;top:303px;height:67.5px;width:592.300px"></div>
<div class="field" style="left:19.300px;top:405.2px;height:67.5px;width:592.300px"></div>
<div class="field" style="left:19.300px;top:506.4px;height:88.6px;width:592.300px"></div>
</div>
<div class="t" style="left:787.4px;top:330.12px;font-size:15.69px;color:#6b6b6b;transform-origin:0 84.65%;transform:scaleY(1.13);">WHT Code</div>
<svg class="abs" style="left:1342px;top:330px" width="14" height="10" viewBox="0 0 14 10"><path d="M2.400 2.600h9.200L7 7.700z" fill="#5c5c5c"/></svg>
<div class="abs" style="left:783px;top:401.5px;width:33.2px;height:4px;background:#fff"></div>
<div class="t" style="left:787.5px;top:402.3px;font-size:10.63px;color:#7a7a7a;transform-origin:0 84.65%;transform:scaleY(1.26);">WHT</div>
<div class="t" style="left:787.5px;top:436.1px;font-size:15.82px;color:#2a2a2a;transform-origin:0 84.65%;transform:scaleY(1.18);">0.00</div>
<div class="abs" style="left:783px;top:503.3px;width:81.4px;height:4px;background:#fff"></div>
<div class="t" style="left:787.5px;top:502.76px;font-size:12.21px;color:#7a7a7a;transform-origin:0 84.65%;transform:scaleY(1.09);">WHT Amount</div>
<div class="t" style="left:787.5px;top:537.1px;font-size:15.82px;color:#2a2a2a;transform-origin:0 84.65%;transform:scaleY(1.18);">0.00</div>
<div class="abs" style="left:783px;top:605.5px;width:225.8px;height:4px;background:#fff"></div>
<div class="t" style="left:787.5px;top:604.72px;font-size:12.5px;color:#7a7a7a;transform-origin:0 84.65%;transform:scaleY(1.07);">Unit Price Transaction (Inclusive of tax)</div>
<div class="t" style="left:787.5px;top:639.3px;font-size:15.82px;color:#2a2a2a;transform-origin:0 84.65%;transform:scaleY(1.18);">0.00</div>
<div class="abs" style="left:783px;top:707.7px;width:75px;height:4px;background:#fff"></div>
<div class="t" style="left:787.5px;top:707.03px;font-size:12.37px;color:#7a7a7a;transform-origin:0 84.65%;transform:scaleY(1.08);">Txn Amount</div>
<div class="t" style="left:787.5px;top:741.5px;font-size:15.82px;color:#2a2a2a;transform-origin:0 84.65%;transform:scaleY(1.18);">0.00</div>
<div class="t" style="left:787.4px;top:837.53px;font-size:16.15px;color:#6b6b6b;transform-origin:0 84.65%;transform:scaleY(1.13);">Remarks</div>
<svg class="abs" style="left:1346px;top:871px" width="13" height="12" viewBox="0 0 13 12"><path d="M2 10.500L10.500 1.500M6.500 10.500l4-4.500" stroke="#333" stroke-width="1.100" fill="none"/></svg>
<!--RIGHT-PANEL-END-->

<div id="hshadow" class="abs"></div>
<!--ANNOTATIONS-START-->
<svg class="abs" style="left:0;top:0;pointer-events:none" width="1440" height="900" viewBox="0 0 1440 900">
<rect x="1031.500" y="201.800" width="96.500" height="32.900" fill="none" stroke="#fe0000" stroke-width="2.800" stroke-linejoin="round"/>
<path d="M476.700 441.500L1016 231.900" stroke="#fe0000" stroke-width="3.200" stroke-linecap="round" fill="none"/>
<path d="M1026.600 227.700L1011.800 227.300 1014.300 238.300z" fill="#fe0000" stroke="#fe0000" stroke-width=".8" stroke-linejoin="round"/>
</svg>
<!--ANNOTATIONS-END-->

</body>
</html>
